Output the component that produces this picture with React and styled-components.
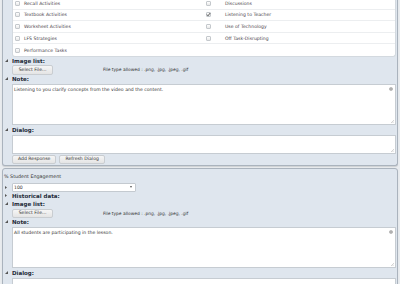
import React from 'react';
import styled, { createGlobalStyle, css } from 'styled-components';

const GlobalStyle = createGlobalStyle`
    html, body {
        margin: 0;
        padding: 0;
        background: #e9ecef;
        font-family: "DejaVu Sans", Verdana, sans-serif;
        color: #333;
    }
`;

const Page = styled.div`
    display: flex;
    flex-direction: column;
    gap: 2px;
    padding: 0 2px;
    margin-top: -2px;
`;

const Panel = styled.section`
    display: flex;
    flex-direction: column;
    background: #dfe6ee;
    border: 1px solid #aab3bd;
    border-radius: 0 0 3px 3px;
    box-shadow: 0 1px 1px rgba(0, 0, 0, .12);
    padding: 0 1px 1px 0;

    ${({ cut }) => cut && css`
        border-top: 0;
    `};

    ${({ top }) => top && css`
        border-radius: 3px;
        padding-top: 4px;
    `};
`;

const CheckGrid = styled.div`
    display: grid;
    grid-template-columns: 1fr 1fr;
    margin-left: 9px;
    background: #fff;
    border: 1px solid #d3d9df;
    border-top: 0;
    border-radius: 0 0 3px 3px;
`;

const CheckColumn = styled.div`
    display: flex;
    flex-direction: column;
`;

const CheckRow = styled.label`
    display: flex;
    align-items: center;
    height: 11.6px;
    box-sizing: border-box;
    padding-left: 2px;
    gap: ${({ wide }) => (wide ? '14px' : '4px')};
    border-bottom: 1px solid #eceef0;
    font-size: 4.6px;
    color: #4a3f4a;

    &:last-child {
        border-bottom: 0;
    }
`;

const Box = styled.span`
    position: relative;
    width: 5px;
    height: 5px;
    box-sizing: border-box;
    border: 1px solid #c4c8cc;
    border-radius: 1px;
    background: linear-gradient(#fff, #e8e8e8);
    flex: none;
`;

const Tick = styled.svg`
    position: absolute;
    left: -1px;
    top: -1px;
`;

const FieldLabel = styled.div`
    display: flex;
    align-items: center;
    height: 8px;
    font-size: 5.5px;
    font-weight: bold;
    color: #1e2a38;
`;

const Caption = styled.div`
    display: flex;
    align-items: center;
    height: 8px;
    padding-left: 1px;
    font-size: 4.8px;
    color: #333;
`;

const SelectRow = styled.div`
    display: flex;
    align-items: center;
    margin-top: 2px;
`;

const Toggle = styled.span`
    display: flex;
    align-items: center;
    width: 9px;
    padding-left: 2px;
    box-sizing: border-box;
    flex: none;
`;

const Indented = styled.div`
    display: flex;
    align-items: center;
    margin-left: 9px;
    margin-top: ${({ gap }) => gap || 0}px;
    margin-bottom: ${({ after }) => after || 0}px;
    gap: 3px;
`;

const Button = styled.button`
    height: ${({ tall }) => (tall ? 10 : 9)}px;
    padding: 0 5px;
    box-sizing: border-box;
    border: 1px solid #c9cdd1;
    border-radius: 2px;
    background: linear-gradient(#f6f6f6, #e4e4e4);
    font-family: inherit;
    font-size: 4.6px;
    color: #333;
    line-height: 1;
`;

const FileButton = styled(Button)`
    width: 41px;
`;

const FileHint = styled.span`
    margin-left: 47px;
    font-size: 4.4px;
    color: #333;
`;

const TextBox = styled.div`
    position: relative;
    flex: 1;
    height: ${({ h }) => h}px;
    box-sizing: border-box;
    background: #fff;
    border: 1px solid #c6ccd2;
    padding: 2px 1px;
    font-size: 4.6px;
    color: #333;
`;

const Grip = styled.svg`
    position: absolute;
    right: 1px;
    bottom: 1px;
`;

const Spell = styled.svg`
    position: absolute;
    right: 2px;
    top: 2px;
`;

const Select = styled.div`
    display: flex;
    align-items: center;
    justify-content: space-between;
    width: 124px;
    height: 9px;
    box-sizing: border-box;
    padding: 0 3px 0 1px;
    background: #fff;
    border: 1px solid #c4cad0;
    border-radius: 1px;
    font-size: 4.6px;
    color: #333;
`;

const Arrow = styled.span`
    width: 0;
    height: 0;
    border-left: 1.5px solid transparent;
    border-right: 1.5px solid transparent;
    border-top: 2px solid #555;
`;

const Triangle = ({ open }) =>
    open ? (
        <svg width="3" height="3" viewBox="0 0 3 3">
            <polygon points="3,0 3,3 0,3" fill="#555" />
        </svg>
    ) : (
        <svg width="2" height="3" viewBox="0 0 2 3">
            <polygon points="0,0 2,1.5 0,3" fill="#555" />
        </svg>
    );

const Check = ({ label, checked, wide }) => (
    <CheckRow wide={wide}>
        <Box>
            {checked && (
                <Tick width="5" height="5" viewBox="0 0 5 5">
                    <path d="M1 2.6 L2 3.8 L4.2 1" fill="none" stroke="#333" strokeWidth="0.8" />
                </Tick>
            )}
        </Box>
        {label}
    </CheckRow>
);

const Field = ({ label, open = true }) => (
    <FieldLabel>
        <Toggle><Triangle open={open} /></Toggle>
        {label}
    </FieldLabel>
);

const ResizeGrip = () => (
    <Grip width="3" height="3" viewBox="0 0 3 3">
        <path d="M3 0 L0 3 M3 1.5 L1.5 3" stroke="#aaa" strokeWidth="0.5" />
    </Grip>
);

const FileRow = ({ gap }) => (
    <Indented gap={gap}>
        <FileButton tall={gap === 0}>Select File...</FileButton>
        <FileHint>File type allowed : .png, .jpg, .jpeg, .gif</FileHint>
    </Indented>
);

const Note = ({ text, h }) => (
    <Indented gap={1} after={1}>
        <TextBox h={h}>
            {text}
            <Spell width="4" height="4" viewBox="0 0 4 4">
                <circle cx="2" cy="2" r="1.8" fill="#9a9a9a" />
                <circle cx="2" cy="2" r="0.7" fill="#dcdcdc" />
            </Spell>
            <ResizeGrip />
        </TextBox>
    </Indented>
);

const left = ['Recall Activities', 'Textbook Activities', 'Worksheet Activities', 'LFS Strategies', 'Performance Tasks'];
const right = [
    { label: 'Discussions' },
    { label: 'Listening to Teacher', checked: true },
    { label: 'Use of Technology' },
    { label: 'Off Task-Disrupting' },
    { label: '' },
];

const App = () => (
    <>
        <GlobalStyle />
        <Page>
            <Panel cut>
                <CheckGrid>
                    <CheckColumn>
                        {left.map((label) => <Check key={label} label={label} />)}
                    </CheckColumn>
                    <CheckColumn>
                        {right.map(({ label, checked }, i) =>
                            label ? <Check key={label} label={label} checked={checked} wide /> : <CheckRow key={i} />
                        )}
                    </CheckColumn>
                </CheckGrid>
                <Field label="Image list:" />
                <FileRow gap={0} />
                <Field label="Note:" />
                <Note h={41} text="Listening to you clarify concepts from the video and the content." />
                <Field label="Dialog:" />
                <Indented gap={1}>
                    <TextBox h={19}><ResizeGrip /></TextBox>
                </Indented>
                <Indented gap={1}>
                    <Button>Add Response</Button>
                    <Button>Refresh Dialog</Button>
                </Indented>
            </Panel>
            <Panel top>
                <Caption>% Student Engagement</Caption>
                <SelectRow>
                    <Toggle><Triangle /></Toggle>
                    <Select>100<Arrow /></Select>
                </SelectRow>
                <Field label="Historical data:" open={false} />
                <Field label="Image list:" />
                <FileRow gap={1} />
                <Field label="Note:" />
                <Note h={41} text="All students are participating in the lesson." />
                <Field label="Dialog:" />
                <Indented gap={1}>
                    <TextBox h={30}><ResizeGrip /></TextBox>
                </Indented>
            </Panel>
        </Page>
    </>
);

export default App;
